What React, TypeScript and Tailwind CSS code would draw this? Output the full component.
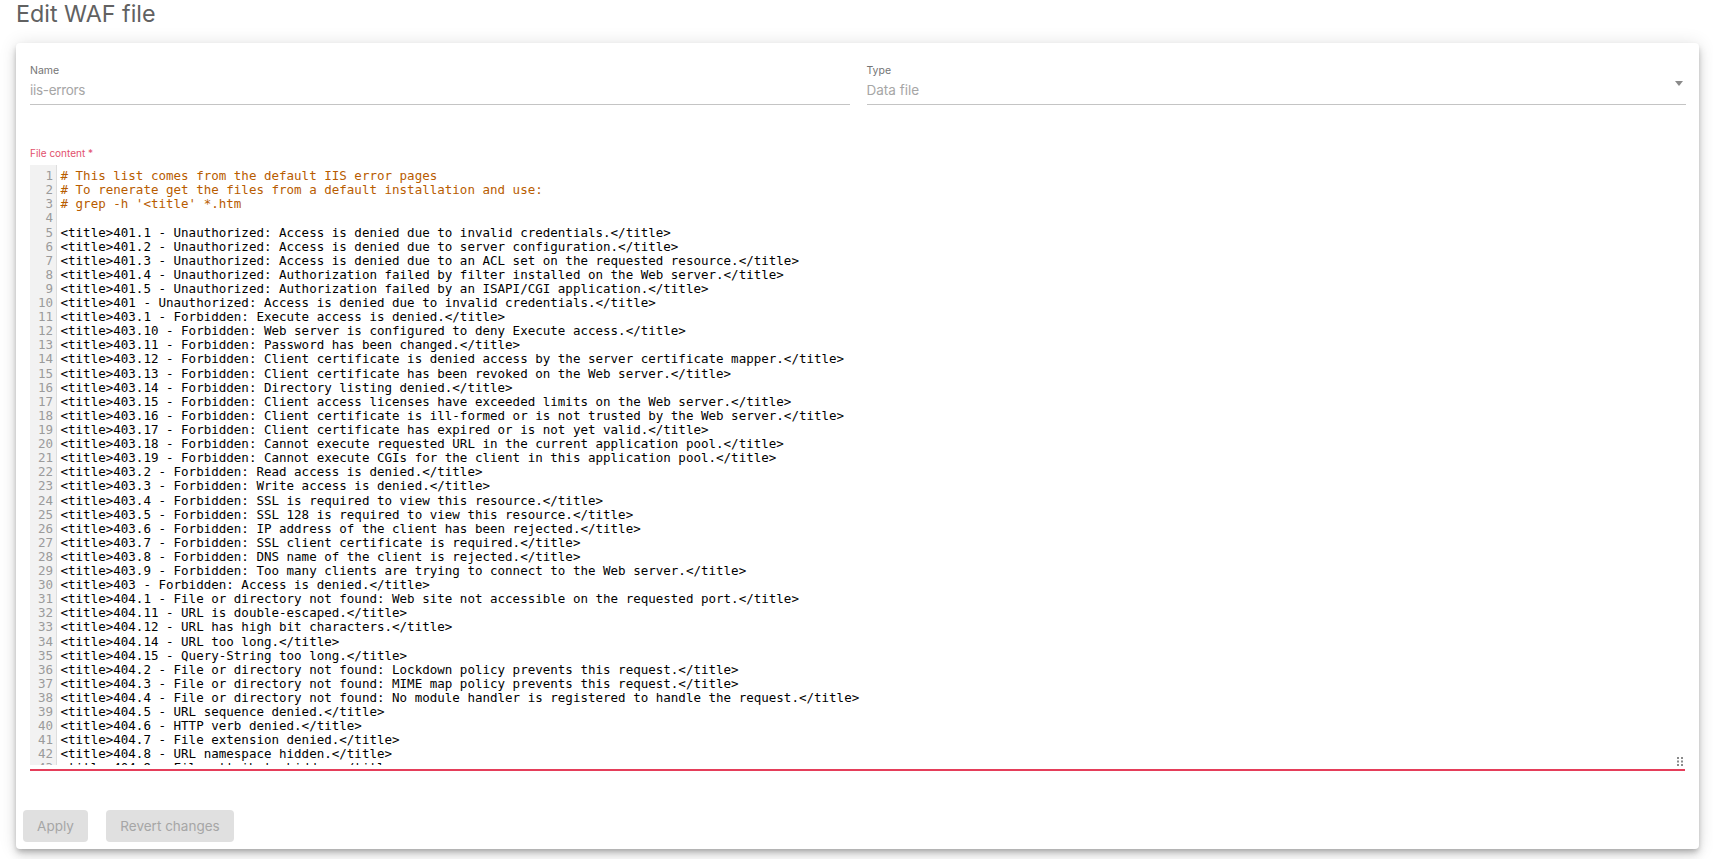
const comments = [
  "# This list comes from the default IIS error pages",
  "# To renerate get the files from a default installation and use:",
  "# grep -h '<title' *.htm",
  "",
];
const lines = [
  "401.1 - Unauthorized: Access is denied due to invalid credentials.",
  "401.2 - Unauthorized: Access is denied due to server configuration.",
  "401.3 - Unauthorized: Access is denied due to an ACL set on the requested resource.",
  "401.4 - Unauthorized: Authorization failed by filter installed on the Web server.",
  "401.5 - Unauthorized: Authorization failed by an ISAPI/CGI application.",
  "401 - Unauthorized: Access is denied due to invalid credentials.",
  "403.1 - Forbidden: Execute access is denied.",
  "403.10 - Forbidden: Web server is configured to deny Execute access.",
  "403.11 - Forbidden: Password has been changed.",
  "403.12 - Forbidden: Client certificate is denied access by the server certificate mapper.",
  "403.13 - Forbidden: Client certificate has been revoked on the Web server.",
  "403.14 - Forbidden: Directory listing denied.",
  "403.15 - Forbidden: Client access licenses have exceeded limits on the Web server.",
  "403.16 - Forbidden: Client certificate is ill-formed or is not trusted by the Web server.",
  "403.17 - Forbidden: Client certificate has expired or is not yet valid.",
  "403.18 - Forbidden: Cannot execute requested URL in the current application pool.",
  "403.19 - Forbidden: Cannot execute CGIs for the client in this application pool.",
  "403.2 - Forbidden: Read access is denied.",
  "403.3 - Forbidden: Write access is denied.",
  "403.4 - Forbidden: SSL is required to view this resource.",
  "403.5 - Forbidden: SSL 128 is required to view this resource.",
  "403.6 - Forbidden: IP address of the client has been rejected.",
  "403.7 - Forbidden: SSL client certificate is required.",
  "403.8 - Forbidden: DNS name of the client is rejected.",
  "403.9 - Forbidden: Too many clients are trying to connect to the Web server.",
  "403 - Forbidden: Access is denied.",
  "404.1 - File or directory not found: Web site not accessible on the requested port.",
  "404.11 - URL is double-escaped.",
  "404.12 - URL has high bit characters.",
  "404.14 - URL too long.",
  "404.15 - Query-String too long.",
  "404.2 - File or directory not found: Lockdown policy prevents this request.",
  "404.3 - File or directory not found: MIME map policy prevents this request.",
  "404.4 - File or directory not found: No module handler is registered to handle the request.",
  "404.5 - URL sequence denied.",
  "404.6 - HTTP verb denied.",
  "404.7 - File extension denied.",
  "404.8 - URL namespace hidden.",
  "404.9 - File attribute hidden.",
];
const all = [
  ...comments,
  ...lines.map((l) => `<title>${l}</title>`),
];
const rowClass = (i: number) => (i === 3 || i === 13 || i === 22 || i === 32 ? "h-[15px]" : "h-[14px]");

function Field({ label, value, caret, valueClass }: { label: string; value: string; caret?: boolean; valueClass?: string }) {
  return (
    <div className="relative flex-1 h-[41px] border-b border-[#c4c4c4]">
      <div className="text-[10.5px] leading-[14px] text-[#757575]">{label}</div>
      <div className={`mt-[3px] text-[13.5px] leading-[18px] text-[#a6a6a6] ${valueClass ?? ""}`}>{value}</div>
      {caret && (
        <div className="absolute right-[3px] top-[17px] w-0 h-0 border-l-[4px] border-r-[4px] border-t-[5px] border-l-transparent border-r-transparent border-t-[#8a8a8a]" />
      )}
    </div>
  );
}

export default function App() {
  return (
    <div className="h-[859px] overflow-hidden bg-white font-['Inter',sans-serif]">
      <h1 className="pl-4 text-[23.3px] leading-[27px] font-normal text-[#616161]">Edit WAF file</h1>
      <div className="ml-4 mr-[14px] mt-[16px] h-[806px] rounded-[4px] bg-white shadow-[0_3px_5px_-1px_rgba(0,0,0,0.2),0_6px_10px_0_rgba(0,0,0,0.14),0_1px_18px_0_rgba(0,0,0,0.12)] pt-[21px]">
        <div className="flex gap-[17px] pl-[14px] pr-[13px]">
          <Field label="Name" value="iis-errors" valueClass="tracking-[-0.3px]" />
          <Field label="Type" value="Data file" caret />
        </div>
        <div className="pl-[14px] pr-[14px] mt-[41px]">
          <div className="text-[10px] leading-[14px] text-[#e2506c]">File content *</div>
          <div className="relative mt-[5px] h-[606px] border-b-2 border-[#e53e5a]">
            <div className="h-[600px] overflow-hidden flex font-['DejaVu_Sans_Mono',monospace] text-[12.53px] leading-[14px]">
              <div className="w-[27px] shrink-0 bg-[#f2f2f2] border-r border-[#dedede] text-right pr-[3px] pt-[4px] text-[#9b9b9b]">
                {all.map((_, i) => (
                  <div key={i} className={rowClass(i)}>{i + 1}</div>
                ))}
              </div>
              <div className="pl-[3.5px] pt-[4px] text-black whitespace-pre">
                {all.map((l, i) => (
                  <div key={i} className={`${rowClass(i)} ${i < 3 ? "text-[#b85c00]" : ""}`}>{l}</div>
                ))}
              </div>
            </div>
            <svg className="absolute right-[2px] bottom-[3px]" width="6" height="9" viewBox="0 0 6 9">
              <g fill="#8a8a8a">
                <rect x="0" y="0" width="2" height="2" /><rect x="4" y="0" width="2" height="2" />
                <rect x="0" y="3.5" width="2" height="2" /><rect x="4" y="3.5" width="2" height="2" />
                <rect x="0" y="7" width="2" height="2" /><rect x="4" y="7" width="2" height="2" />
              </g>
            </svg>
          </div>
        </div>
        <div className="flex gap-[18px] pl-[7px] mt-[39px]">
          <button className="h-[32px] w-[65px] rounded-[4px] bg-[#e0e0e0] text-[#a6a6a6] text-[13.5px]">Apply</button>
          <button className="h-[32px] w-[128px] rounded-[4px] bg-[#e0e0e0] text-[#a6a6a6] text-[13.5px]">Revert changes</button>
        </div>
      </div>
    </div>
  );
}
